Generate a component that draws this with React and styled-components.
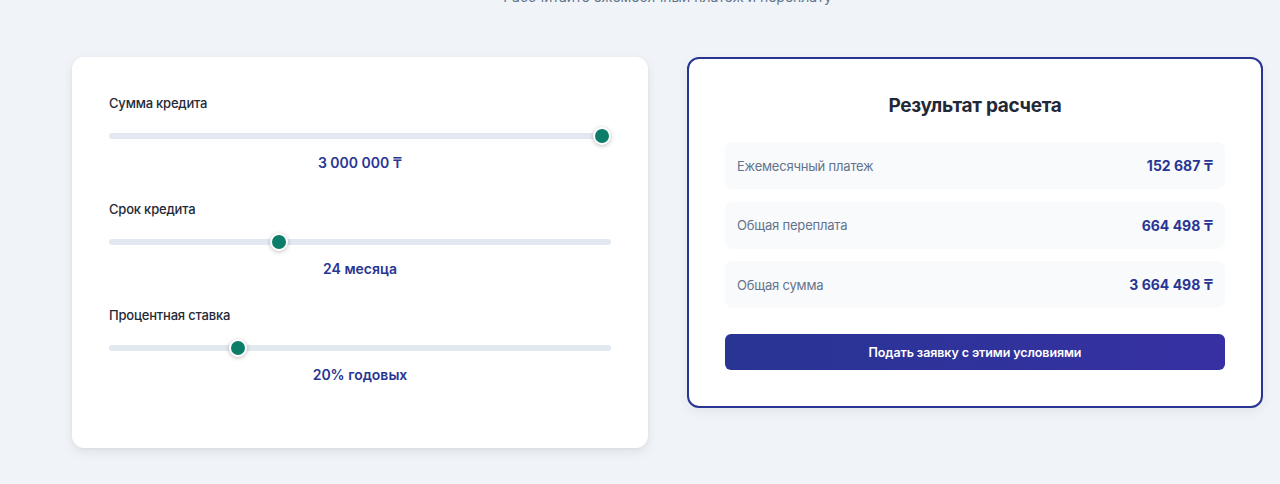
import React from "react";
import styled, { createGlobalStyle } from "styled-components";

const Global = createGlobalStyle`
  html, body { margin: 0; padding: 0; background: #f0f4f8; }
  body { font-family: Inter, "Noto Sans", "DejaVu Sans", sans-serif; color: #1f2937; overflow: hidden; }
  * { box-sizing: border-box; }
`;

const Page = styled.div`
  width: 1280px;
  height: 484px;
  padding-left: 72px;
`;

const Subtitle = styled.p`
  width: 1191px;
  margin: -13px 0 50px;
  text-align: center;
  font-size: 14px;
  line-height: 20px;
  color: #64748b;
`;

const Grid = styled.div`
  width: 1191px;
  display: grid;
  grid-template-columns: 576px 576px;
  column-gap: 39px;
  align-items: start;
`;

const InputsCard = styled.div`
  background: #fff;
  border-radius: 12px;
  padding: 36px 37px 37px;
  box-shadow: 0 4px 12px rgba(15, 23, 42, 0.08), 0 1px 3px rgba(15, 23, 42, 0.05);
`;

const Field = styled.div`
  display: flex;
  flex-direction: column;
  margin-bottom: 25px;
`;

const Label = styled.label`
  font-size: 13px;
  font-weight: 500;
  letter-spacing: -0.2px;
  line-height: 20px;
  color: #1f2937;
  margin-bottom: 14px;
`;

const Range = styled.input`
  -webkit-appearance: none;
  appearance: none;
  width: 100%;
  height: 18px;
  margin: 0 0 7px;
  background: transparent;
  &::-webkit-slider-runnable-track {
    height: 6px;
    border-radius: 3px;
    background: #e2e8f0;
  }
  &::-webkit-slider-thumb {
    -webkit-appearance: none;
    width: 18px;
    height: 18px;
    margin-top: -6px;
    border-radius: 50%;
    background: #0b7d69;
    border: 2px solid #fff;
    box-shadow: 0 1px 4px rgba(0, 0, 0, 0.25);
  }
`;

const Value = styled.div`
  text-align: center;
  font-size: 14px;
  font-weight: 600;
  line-height: 22px;
  color: #283593;
`;

const ResultCard = styled.div`
  background: #fff;
  border: 2px solid #283593;
  border-radius: 12px;
  padding: 34px 36px 36px;
  box-shadow: 0 4px 12px rgba(15, 23, 42, 0.06);
`;

const Title = styled.h2`
  margin: 0 0 23px;
  text-align: center;
  font-size: 19px;
  font-weight: 700;
  letter-spacing: -0.3px;
  line-height: 26px;
  color: #1f2937;
`;

const Rows = styled.div`
  display: flex;
  flex-direction: column;
  gap: 12.5px;
  margin-bottom: 26px;
`;

const Row = styled.div`
  height: 47px;
  padding: 0 12px;
  display: flex;
  align-items: center;
  justify-content: space-between;
  background: #f8fafc;
  border-radius: 8px;
`;

const RowLabel = styled.span`
  font-size: 13px;
  letter-spacing: -0.2px;
  color: #64748b;
`;

const RowValue = styled.span`
  font-size: 14px;
  font-weight: 700;
  color: #283593;
`;

const Button = styled.button`
  width: 100%;
  height: 36px;
  border: none;
  border-radius: 6px;
  background: linear-gradient(90deg, #283593 0%, #3730a3 100%);
  color: #fff;
  font-family: inherit;
  font-size: 12.5px;
  font-weight: 600;
  letter-spacing: -0.1px;
  cursor: pointer;
`;

const fields = [
  { label: "Сумма кредита", value: 100, text: "3 000 000 ₸" },
  { label: "Срок кредита", value: 33.3, text: "24 месяца" },
  { label: "Процентная ставка", value: 24.8, text: "20% годовых" },
];

const results = [
  { label: "Ежемесячный платеж", value: "152 687 ₸" },
  { label: "Общая переплата", value: "664 498 ₸" },
  { label: "Общая сумма", value: "3 664 498 ₸" },
];

export default function App() {
  return (
    <>
      <Global />
      <Page>
        <Subtitle>Рассчитайте ежемесячный платеж и переплату</Subtitle>
        <Grid>
          <InputsCard>
            {fields.map((f) => (
              <Field key={f.label}>
                <Label>{f.label}</Label>
                <Range type="range" min="0" max="100" step="0.1" defaultValue={f.value} />
                <Value>{f.text}</Value>
              </Field>
            ))}
          </InputsCard>
          <ResultCard>
            <Title>Результат расчета</Title>
            <Rows>
              {results.map((r) => (
                <Row key={r.label}>
                  <RowLabel>{r.label}</RowLabel>
                  <RowValue>{r.value}</RowValue>
                </Row>
              ))}
            </Rows>
            <Button>Подать заявку с этими условиями</Button>
          </ResultCard>
        </Grid>
      </Page>
    </>
  );
}
